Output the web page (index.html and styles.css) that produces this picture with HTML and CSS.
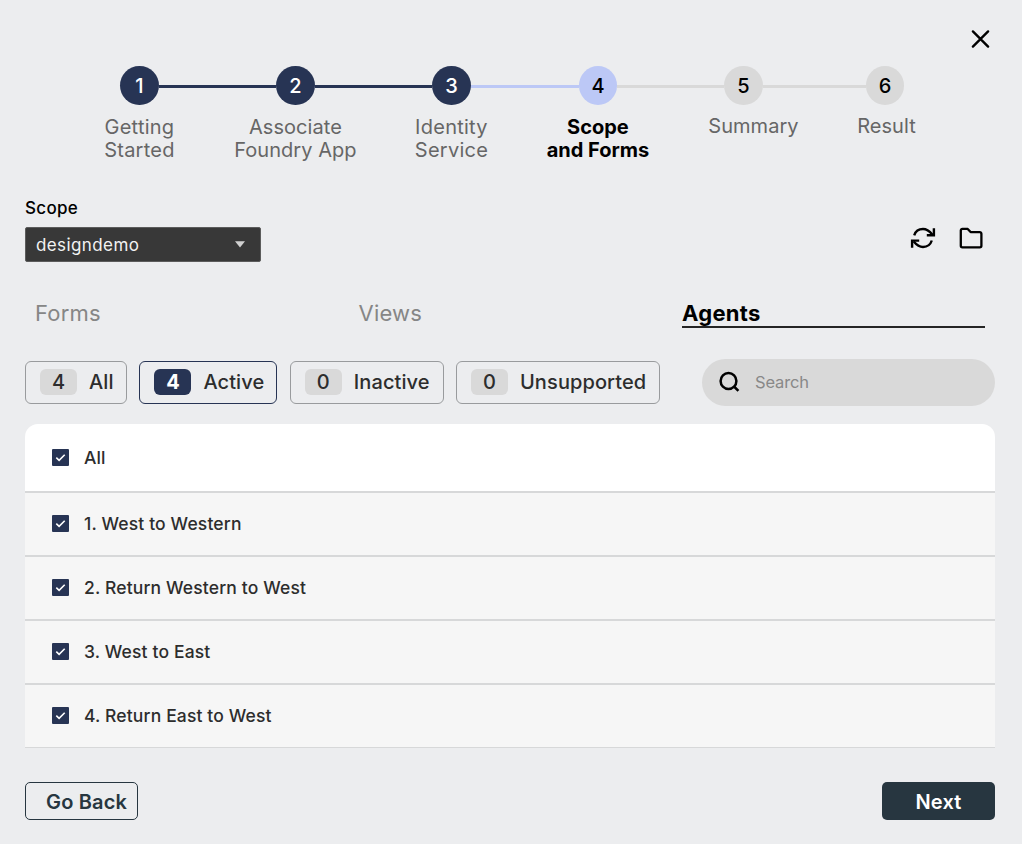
FILE: index.html
```html
<!DOCTYPE html>
<html lang="en">
<head>
<meta charset="utf-8">
<title>Scope and Forms</title>
<link rel="stylesheet" href="styles.css">
</head>
<body>
<main class="wizard">
  <header class="top">
    <button class="icon-button" aria-label="Close">
      <svg width="21" height="20" viewBox="0 0 21 20"><path d="M2.900 2.400 18.100 17.600M18.100 2.400 2.900 17.600" fill="none" stroke="#000" stroke-width="2.400" stroke-linecap="round"/></svg>
    </button>
  </header>

  <nav class="stepper">
    <div class="step done"><span class="dot">1</span><span class="label wide">Getting<br>Started</span></div>
    <span class="line line-done w1"></span>
    <div class="step done"><span class="dot">2</span><span class="label">Associate<br>Foundry App</span></div>
    <span class="line line-done w2"></span>
    <div class="step done"><span class="dot">3</span><span class="label wide">Identity<br>Service</span></div>
    <span class="line line-current w3"></span>
    <div class="step current"><span class="dot">4</span><span class="label">Scope<br>and Forms</span></div>
    <span class="line w4"></span>
    <div class="step"><span class="dot">5</span><span class="label summary">Summary</span></div>
    <span class="line w5"></span>
    <div class="step"><span class="dot">6</span><span class="label result">Result</span></div>
  </nav>

  <section class="scope">
    <div class="field">
      <span class="field-label">Scope</span>
      <div class="select"><span>designdemo</span>
        <svg width="10" height="7" viewBox="0 0 10 7"><path d="M0 .3h10L5 6.500z" fill="#d0d0d0"/></svg>
      </div>
    </div>
    <div class="tools">
      <svg width="26" height="24" viewBox="0 0 26 24" fill="none" stroke="#000" stroke-width="2.400"><path d="M4.200 9.300C5.500 5.400 9 3 13 3c3.600 0 6.300 1.900 9.300 5.500"/><path d="M23.900 2.200v7.100h-7.100"/><path d="M21.800 14.500c-1.300 4-4.800 6.500-8.800 6.500-3.600 0-6.300-1.900-9.300-5.500"/><path d="M2.100 21.700v-7.100h7.100"/></svg>
      <svg width="24" height="24" viewBox="0 0 24 24" fill="none" stroke="#000" stroke-width="2.300" stroke-linejoin="round"><path d="M3.400 2.900h5.300l2.900 3.200h9.200a1.600 1.600 0 0 1 1.600 1.600v12a1.600 1.600 0 0 1-1.600 1.600H3.400a1.600 1.600 0 0 1-1.600-1.600V4.500a1.600 1.600 0 0 1 1.600-1.600z"/></svg>
    </div>
  </section>

  <nav class="tabs">
    <a class="tab">Forms</a>
    <a class="tab">Views</a>
    <a class="tab selected">Agents</a>
  </nav>

  <section class="filters">
    <button class="chip all"><span class="count">4</span><span>All</span></button>
    <button class="chip active"><span class="count">4</span><span>Active</span></button>
    <button class="chip inactive"><span class="count">0</span><span>Inactive</span></button>
    <button class="chip unsupported"><span class="count">0</span><span>Unsupported</span></button>
    <div class="search">
      <svg width="22" height="22" viewBox="0 0 22 22" fill="none" stroke="#000" stroke-width="2.500"><circle cx="9.500" cy="10" r="7.900"/><path d="m15 15.500 4.400 4.400"/></svg>
      <span>Search</span>
    </div>
  </section>

  <ul class="list">
    <li class="row head"><span class="check"><svg width="17" height="17" viewBox="0 0 17 17"><path d="m4.300 8.700 2.800 2.700 5.600-5.600" fill="none" stroke="#fff" stroke-width="1.600"/></svg></span><span>All</span></li>
    <li class="row"><span class="check"><svg width="17" height="17" viewBox="0 0 17 17"><path d="m4.300 8.700 2.800 2.700 5.600-5.600" fill="none" stroke="#fff" stroke-width="1.600"/></svg></span><span>1. West to Western</span></li>
    <li class="row"><span class="check"><svg width="17" height="17" viewBox="0 0 17 17"><path d="m4.300 8.700 2.800 2.700 5.600-5.600" fill="none" stroke="#fff" stroke-width="1.600"/></svg></span><span>2. Return Western to West</span></li>
    <li class="row"><span class="check"><svg width="17" height="17" viewBox="0 0 17 17"><path d="m4.300 8.700 2.800 2.700 5.600-5.600" fill="none" stroke="#fff" stroke-width="1.600"/></svg></span><span>3. West to East</span></li>
    <li class="row"><span class="check"><svg width="17" height="17" viewBox="0 0 17 17"><path d="m4.300 8.700 2.800 2.700 5.600-5.600" fill="none" stroke="#fff" stroke-width="1.600"/></svg></span><span>4. Return East to West</span></li>
  </ul>

  <footer class="actions">
    <button class="button back">Go Back</button>
    <button class="button next">Next</button>
  </footer>
</main>
</body>
</html>
```
FILE: styles.css
```css
* { box-sizing: border-box; }
body { margin: 0; background: #ecedef; font-family: Inter, "Liberation Sans", sans-serif; color: #000; }
button { font: inherit; margin: 0; padding: 0; background: none; border: 0; }
svg { display: block; flex: none; }

.wizard { width: 1022px; height: 844px; padding: 0 27px 0 25px; overflow: hidden; }

.top { display: flex; justify-content: flex-end; height: 66px; padding: 29px 4px 0 0; }
.icon-button { width: 21px; height: 20px; }

.stepper { display: flex; height: 132px; padding-left: 95.200px; }
.step { display: flex; flex-direction: column; align-items: center; width: 38.500px; flex: none; }
.dot { width: 38.500px; height: 39px; border-radius: 50%; background: #d9d9d9; display: flex; align-items: center; justify-content: center; font-size: 20px; font-weight: 500; }
.done .dot { background: #273454; color: #fff; }
.current .dot { background: #bcc8f6; }
.label { margin-top: 11px; width: max-content; text-align: center; font-size: 20px; line-height: 23px; letter-spacing: 0.050px; color: #666; }
.label.wide { letter-spacing: 0.250px; }
.current .label { color: #000; font-weight: 700; letter-spacing: 0; }
.summary, .result { margin-top: 10px; }
.summary { padding-left: 20px; }
.result { padding-left: 3px; }
.line { height: 3px; margin-top: 19px; background: #d9d9d9; flex: none; }
.line-done { background: #273454; }
.line-current { background: #bcc8f6; }
.w1, .w2 { width: 117.500px; }
.w3 { width: 108px; }
.w4 { width: 107px; }
.w5 { width: 103px; }

.scope { display: flex; justify-content: space-between; height: 98px; }
.field-label { display: block; font-size: 17px; line-height: 21px; font-weight: 500; letter-spacing: 0.3px; }
.select { display: flex; align-items: center; justify-content: space-between; width: 236px; height: 35px; margin-top: 8px; padding: 0 15px 0 10px; background: #383838; border: 1px solid #5c5c5c; border-radius: 2px; color: #f2f2f2; font-size: 17px; letter-spacing: 0.4px; }
.tools { display: flex; gap: 23px; padding: 28px 12px 0 0; }

.tabs { display: grid; grid-template-columns: 303px 303px 303px; gap: 20.500px; height: 63px; }
.tab { height: 32px; padding: 3px 0 0 10px; font-size: 22px; line-height: 28px; letter-spacing: 0.2px; color: #868686; }
.tab.selected { margin: 0 -10px 0 10px; padding-left: 0; color: #000; font-weight: 700; letter-spacing: 0.3px; border-bottom: 2px solid #252525; }

.filters { display: flex; align-items: center; height: 47px; }
.chip { display: flex; align-items: center; gap: 12px; height: 43px; flex: none; margin-right: 12.400px; padding: 0 0 1px 14px; border: 1px solid #999b9d; border-radius: 6px; font-size: 20px; font-weight: 500; letter-spacing: 0.1px; color: #2d2d2d; white-space: nowrap; }
.count { width: 37px; height: 26px; border-radius: 6px; background: #d9d9d9; line-height: 26px; text-align: center; letter-spacing: 0; }
.chip.active { width: 138px; border-color: #273454; }
.active .count { background: #273454; color: #fff; font-weight: 700; }
.all { width: 102px; }
.inactive { width: 153.800px; }
.unsupported { width: 204px; }
.search { display: flex; align-items: center; gap: 14px; width: 293px; height: 47px; margin-left: auto; padding: 0 0 1px 17px; border-radius: 24px; background: #d9d9d9; color: #888; font-size: 16.500px; letter-spacing: -0.150px; }

.list { margin: 18px 0 0; padding: 0; list-style: none; border-radius: 13px 13px 0 0; overflow: hidden; }
.row { display: flex; align-items: center; height: 64px; padding: 0 0 1px 27px; background: #f6f6f6; border-bottom: 2px solid #d7d8d9; font-size: 17.500px; font-weight: 500; letter-spacing: 0.140px; color: #2d2d2d; }
.row.head { height: 69px; padding-bottom: 0; background: #fff; }
.row:last-child { height: 63px; border-bottom-width: 1px; }
.check { width: 17px; height: 17px; margin-right: 15px; border-radius: 1px; background: #273454; }

.actions { display: flex; justify-content: space-between; margin-top: 34px; }
.button { width: 113px; height: 38px; padding-top: 2px; border-radius: 5px; font-size: 20px; font-weight: 600; letter-spacing: 0.150px; }
.back { padding-left: 10px; border: 1px solid #273640; color: #273640; }
.next { background: #273640; color: #fff; }
```
